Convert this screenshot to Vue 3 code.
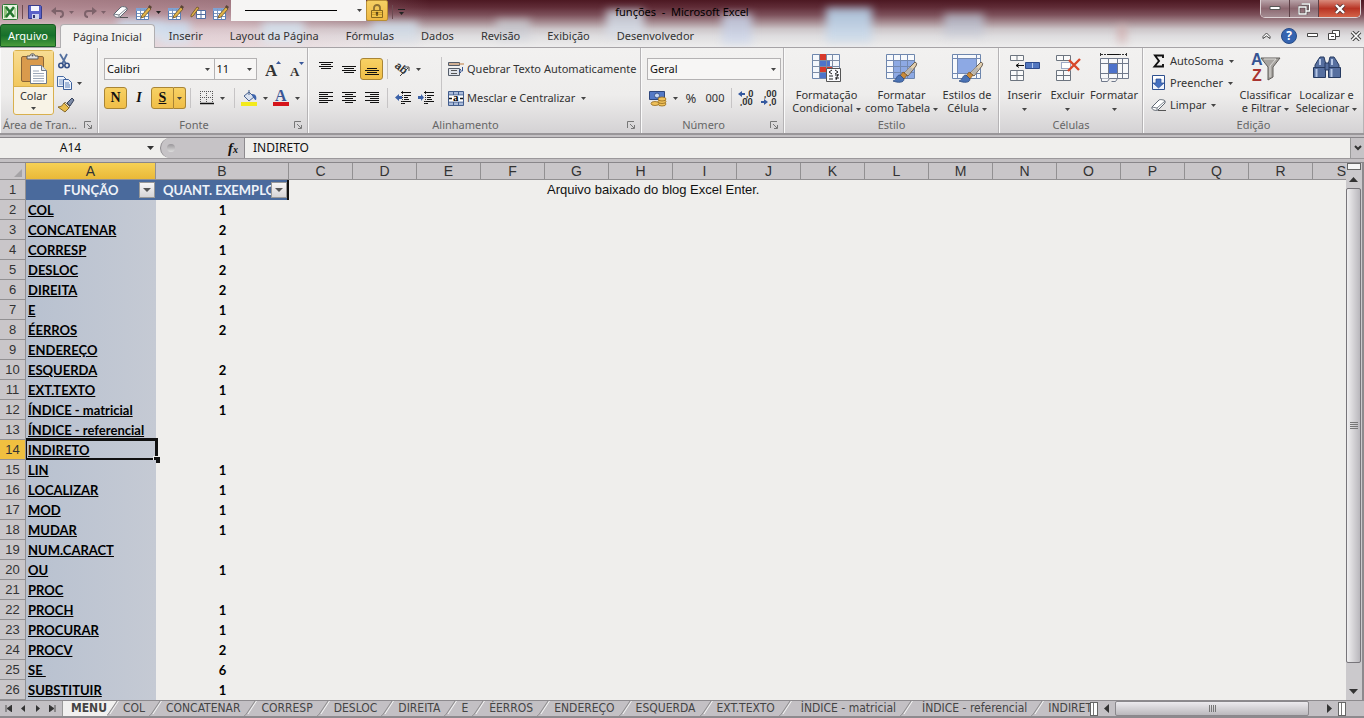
<script setup>
import { h, ref } from 'vue'

const pencil = '<path d="M7 11 14 3l2 2-7 8-3 1z" fill="#e0b348" stroke="#6b5026" stroke-width=".8"/><path d="m13 3 1.500-2L17 3l-1.500 2z" fill="#5b4636"/>'
const miniTable = '<path d="M1.500 4.500h12v11h-12z" fill="#fff" stroke="#5a7fb5"/><path d="M1 4h13v3H1z" fill="#7ea2d4"/><path d="M5.500 5v10M9.500 5v10M2 9.500h11M2 12.500h11" stroke="#7c96bd"/>'
const brush = '<path d="M30 9q3 1 1 4l-8 10-4-3z" fill="#e2cfae" stroke="#6c6156"/><path d="m25 14 3 2-5 6-3-3z" fill="#b9b5b0"/><path d="m18 19 4 3-3 4-4-3z" fill="#c98a3a" stroke="#7d5524" stroke-width=".7"/><path d="M15 22c-4 0-3 5-7 6 5 2 11 2 11-2z" fill="#4a72b4" stroke="#2c4a80" stroke-width=".8"/>'

const icons = {
  excel: [16, 16, '<rect x=".5" y=".5" width="15" height="15" rx="1" fill="#e9f4e3" stroke="#2d7636"/><path d="M2 2h3v12H2z" fill="#8fc27c"/><path d="m4 3 8 10M12 3 4 13" stroke="#23752f" stroke-width="2.600"/><path d="M13 4v9" stroke="#7cb46b"/>'],
  save: [16, 16, '<path d="M1.500 1.500h12l1 1v12h-13z" fill="#5a62c8" stroke="#373c8c"/><path d="M4 2h8v5H4z" fill="#f5f6fc"/><path d="M5 10h7v5H5z" fill="#cfd4ec"/><path d="M6 11h2v3H6z" fill="#30356f"/>'],
  undo: [14, 12, '<path d="M4 5h5c4 0 4 6 0 6" fill="none" stroke="#7d626a" stroke-width="2"/><path d="M0 5l5-4v8z" fill="#7d626a"/>'],
  redo: [14, 12, '<path d="M10 5H5c-4 0-4 6 0 6" fill="none" stroke="#7d626a" stroke-width="2"/><path d="m14 5-5-4v8z" fill="#7d626a"/>'],
  eraser: [16, 14, '<path d="m1 9 7-7c1-1 6 0 6 1v2l-7 7c-2 1-6 0-6-2z" fill="#fff" stroke="#5d6570"/><path d="m1 9 5 1 8-7M6 10v2" fill="none" stroke="#7a828c"/><path d="M7 12.500h8" stroke="#555"/>'],
  tablePencil: [17, 16, miniTable + pencil],
  pencilGrid: [17, 16, '<path d="M6.500 6.500h9v8h-9z" fill="#fff" stroke="#516d9f"/><path d="M11 7v7M7 10.500h8" stroke="#516d9f"/><path d="m1 11 6-8 2 1-6 8-2 1z" fill="#e0b348" stroke="#6b5026" stroke-width=".8"/>'],
  lock: [14, 16, '<path d="M4 8V5c0-4 6-4 6 0v3" fill="none" stroke="#8d7134" stroke-width="1.800"/><path d="M1.500 7.500h11v7h-11z" fill="#f0c448" stroke="#86691f"/><path d="M2 9.500h10M2 11.500h10" stroke="#d19f2e"/><circle cx="7" cy="10" r="1.300" fill="#5e4a19"/><path d="M7 10v3" stroke="#5e4a19" stroke-width="1.400"/>'],
  paste: [28, 32, '<rect x="1.500" y="3.500" width="22" height="25" rx="1.500" fill="#d99a4c" stroke="#8a6537"/><path d="M7 6h11V3h-3c0-3-5-3-5 0H7z" fill="#e3e3e3" stroke="#595959"/><circle cx="12.500" cy="2.500" r="1" fill="#555"/><path d="M10.500 12.500h11l5 5v13h-16z" fill="#fff" stroke="#707a88"/><path d="M21.500 12.500v5h5" fill="#dce4ee" stroke="#707a88"/><path d="M13 18h6M13 20.500h11M13 23h11M13 25.500h11M13 28h11" stroke="#9ba7b8"/>'],
  cut: [14, 16, '<path d="m3 1 6 10M10 1 5 11" stroke="#54709f" stroke-width="1.800"/><circle cx="4" cy="12.500" r="2.200" fill="none" stroke="#344f86" stroke-width="1.600"/><circle cx="10" cy="12.500" r="2.200" fill="none" stroke="#344f86" stroke-width="1.600"/>'],
  copy: [16, 14, '<path d="M.5.5h6l3 3v7h-9z" fill="#eef3fb" stroke="#476aa3"/><path d="M2 4h4M2 6h5M2 8h5" stroke="#7997c6"/><path d="M6.500 3.500h5l3 3v7h-8z" fill="#eef3fb" stroke="#3c5f9b"/><path d="M8 7h4M8 9h5M8 11h5" stroke="#5e82ba"/>'],
  painter: [18, 16, '<path d="m10 6 5-5 2 2-4 6z" fill="#7c8aa6" stroke="#374259"/><path d="m8 5 5 5-2 1-4-4z" fill="#ece3cf" stroke="#6b5c3c" stroke-width=".8"/><path d="m7 6 5 5-4 4-7-5c3 0 5-2 6-4z" fill="#e8bc4c" stroke="#85682a"/>'],
  grow: [16, 18, '<text x="0" y="16" font-family="Liberation Serif, serif" font-size="17" font-weight="bold" fill="#333">A</text><path d="m11 4 2.500-3L16 4z" fill="#39589a"/>'],
  shrink: [16, 18, '<text x="2" y="16" font-family="Liberation Serif, serif" font-size="13" font-weight="bold" fill="#333">A</text><path d="M11 2h5l-2.500 3z" fill="#39589a"/>'],
  borders: [14, 14, '<path d="M.5 0v13M6.500 0v13M12.500 0v13M0 .5h13M0 6.500h13" stroke="#555" stroke-dasharray="1 1"/><path d="M0 12.500h14" stroke="#111" stroke-width="1.500"/>'],
  fill: [16, 16, '<path d="m3 6 5-4 5 5-5 4z" fill="#dbe3f0" stroke="#49628f"/><path d="M8 0v5" stroke="#49628f"/><path d="M11 4c4 0 5 3 4 6-2 0-2-3-4-4z" fill="#3f65ad"/><path d="M0 12h16v4H0z" fill="#f3ea1c"/>'],
  fontColor: [16, 16, '<text x="2" y="11" font-family="Liberation Serif, serif" font-size="16" font-weight="bold" fill="#3c5796">A</text><path d="M0 12h16v4H0z" fill="#d5141b"/>'],
  top: [14, 14, '<path d="M0 .5h14M2 2.500h10M0 4.500h14M2 6.500h10" stroke="#111"/>'],
  middle: [14, 14, '<path d="M0 4.500h14M2 6.500h10M0 8.500h14M2 10.500h10" stroke="#111"/>'],
  bottom: [14, 14, '<path d="M2 6.500h10M0 8.500h14M2 10.500h10M0 12.500h14" stroke="#111"/>'],
  left: [14, 14, '<path d="M0 1.500h14M0 3.500h9M0 5.500h14M0 7.500h9M0 9.500h14M0 11.500h9" stroke="#111"/>'],
  center: [14, 14, '<path d="M0 1.500h14M3 3.500h8M0 5.500h14M3 7.500h8M0 9.500h14M3 11.500h8" stroke="#111"/>'],
  right: [14, 14, '<path d="M0 1.500h14M5 3.500h9M0 5.500h14M5 7.500h9M0 9.500h14M5 11.500h9" stroke="#111"/>'],
  rotate: [16, 16, '<g transform="rotate(40 6 8)"><text x="0" y="10" font-family="Liberation Sans, sans-serif" font-size="11" font-weight="bold" fill="#333">ab</text></g><path d="m6 15 8-8M15 6v4M15 6h-4" stroke="#444" fill="none"/>'],
  outdent: [16, 14, '<path d="M6 1.500h10M9 4.500h7M9 6.500h4M9 8.500h5M6 10.500h10M6 12.500h4" stroke="#111"/><path d="M0 6.500 4 3v2h3v3H4v2z" fill="#3c62a8"/><path d="M7.500 0v14" stroke="#333" stroke-dasharray="1 1"/>'],
  indent: [16, 14, '<path d="M6 1.500h10M9 4.500h7M9 6.500h4M9 8.500h5M6 10.500h10M6 12.500h4" stroke="#111"/><path d="M6 6.500 3 3v2H0v3h3v2z" fill="#3c62a8"/><path d="M7.500 0v14" stroke="#333" stroke-dasharray="1 1"/>'],
  wrap: [16, 16, '<path d="M.5 1.500h11v3H.5zM.5 7.500h11v7H.5z" fill="#dfe3ea" stroke="#545c69"/><path d="M1 3h15" stroke="#c07d3e"/><path d="M3 9.500h6M3 12.500h6" stroke="#555"/><path d="M14.500 6v4h-3M13 8l-2 2 2 2" fill="none" stroke="#39558e"/>'],
  merge: [16, 15, '<path d="M.5.5h15v14H.5z" fill="#a9bbda" stroke="#425d8d"/><path d="M0 4h16M0 11h16M5.500 1v3M10.500 1v3M5.500 11v3M10.500 11v3" stroke="#425d8d"/><path d="M1 4.500h14v6H1z" fill="#fff"/><path d="M1 7.500h3M12 7.500h3" stroke="#111" stroke-width="1.500"/><text x="5" y="10" font-family="Liberation Serif, serif" font-size="11" font-weight="bold">a</text>'],
  money: [18, 17, '<path d="M.5 1.500h15v8H.5z" fill="#5379c6" stroke="#2f477d"/><circle cx="8" cy="5.500" r="2.500" fill="#c7d7f1" stroke="#3a558f"/><g fill="#efc15a" stroke="#936a1e" stroke-width=".8"><ellipse cx="13" cy="14" rx="4" ry="2"/><ellipse cx="13" cy="11.500" rx="4" ry="2"/><ellipse cx="13" cy="9" rx="4" ry="2"/><ellipse cx="6" cy="13.500" rx="4" ry="2"/></g>'],
  incDec: [17, 16, '<path d="M0 4 4 1v2h3v2H4v2z" fill="#34599f"/><text x="8" y="7" font-family="Roboto, sans-serif" font-size="9" font-weight="bold" fill="#333">,0</text><text x="2" y="15" font-family="Roboto, sans-serif" font-size="9" font-weight="bold" fill="#333">,00</text>'],
  decDec: [17, 16, '<path d="M7 12 3 9v2H0v2h3v2z" fill="#34599f"/><text x="3" y="7" font-family="Roboto, sans-serif" font-size="9" font-weight="bold" fill="#333">,00</text><text x="8" y="15" font-family="Roboto, sans-serif" font-size="9" font-weight="bold" fill="#333">,0</text>'],
  conditional: [32, 30, '<path d="M1.500 1.500h27v24h-27z" fill="#f4f7fb" stroke="#6d86ad"/><path d="M8 1h7v6H8zM8 13h13v6H8z" fill="#d8392b"/><path d="M8 7h11v6H8zM8 19h7v6H8z" fill="#4d74cb"/><path d="M8.500 1v25M15.500 1v25M21.500 1v25M1 7.500h28M1 13.500h28M1 19.500h28" stroke="#7d8ca5" fill="none"/><path d="M15.500 15.500h14v13h-14z" fill="#fbfbfd" stroke="#555"/><path d="m21 17-3 2 3 2M18 23h4M18 26h4M24 17l3 2-3 2M24 22h4M24 25h4M27 21l-2 6" stroke="#222" fill="none"/>'],
  formatTable: [33, 30, '<path d="M1.500 1.500h28v24h-28z" fill="#f7f9fc" stroke="#6d86ad"/><path d="M8 7h21v18H8z" fill="#8da9e4"/><path d="M8.500 1v25M15.500 1v25M22.500 1v25M1 7.500h28M1 13.500h28M1 19.500h28" stroke="#7389b2" fill="none"/>' + brush],
  cellStyle: [33, 30, '<path d="M1.500 1.500h28v24h-28z" fill="#f7f9fc" stroke="#6d86ad"/><path d="M6 6h19v14H6z" fill="#8da9e4"/><path d="M6.500 1v25M25.500 1v25M1 5.500h28M1 20.500h28" stroke="#7389b2" fill="none"/>' + brush],
  insert: [32, 28, '<g fill="#fafafa" stroke="#6c747f"><path d="M1.500 1.500h13v5h-13zM1.500 16.500h13v10h-13z"/><path d="M8 2v5M8 17v10M1 21.500h14" fill="none"/></g><path d="M16.500 8.500h14v6h-14z" fill="#5276bf" stroke="#2e4b8b"/><path d="M23.500 9v5" stroke="#b8ccef"/><path d="M7 11.500h8M7 11.500l3-2M7 11.500l3 2" stroke="#111"/>'],
  delete: [32, 28, '<g fill="#fafafa" stroke="#6c747f"><path d="M4.500 1.500h14v5h-14zM4.500 16.500h14v10h-14z"/><path d="M11.500 2v5M11.500 17v10M4 21.500h15" fill="none"/></g><path d="M9.500 8.500h9v6h-9z" fill="#fff" stroke="#445a92" stroke-dasharray="1 1"/><path d="m17 6 10 10M28 5 16 17" stroke="#d8472a" stroke-width="2.400"/>'],
  format: [32, 30, '<path d="M2.500 5.500h28v20h-28z" fill="#f7f8fa" stroke="#70798b"/><path d="M10.500 6v20M19.500 6v20M24.500 6v20M3 10.500h28M3 20.500h28" stroke="#70798b" fill="none"/><path d="M3.500 25.500v3h6l2-3M13.500 28.500h4l2-3" stroke="#70798b" fill="#f7f8fa"/><path d="M11 11h8v9h-8z" fill="#4d72cb"/><path d="M2.500 0v3M28.500 0v3" stroke="#333"/><path d="M3 1.500h25" stroke="#333" stroke-dasharray="2 1"/><path d="M9 1.500h12" stroke="#111"/>'],
  sum: [14, 14, '<path d="M11 4V1.500H3L7 7l-4.500 5.500H11V10" fill="none" stroke="#111" stroke-width="1.900"/>'],
  fillDown: [14, 16, '<path d="M.5.5h12v14H.5z" fill="#eef3fc" stroke="#2e508f"/><path d="M1 1h11v3H1z" fill="#fff"/><path d="M4 4h5v4h3l-5.500 5L1 8h3z" fill="#4470c1" stroke="#264b91" stroke-width=".7"/>'],
  sort: [32, 32, '<path d="M11 6h19l-7 9v10l-5 3V15z" fill="#a7a4a0" stroke="#5f5c59"/><path d="M14 7h12l-6 7v11" fill="none" stroke="#dddbd8"/><text x="1" y="13" font-family="Liberation Sans, sans-serif" font-size="16" font-weight="bold" fill="#365493">A</text><text x="2" y="29" font-family="Liberation Sans, sans-serif" font-size="16" font-weight="bold" fill="#a93430">Z</text>'],
  find: [30, 30, '<g fill="#566f9f" stroke="#263a60"><path d="M8 4h4l2 8v4H3v-4l3-5zM18 4h4l2 3 3 5v4H16v-4z"/><path d="M1.500 14.500h12v10h-12zM16.500 14.500h12v10h-12z"/><path d="M13 10h4v7h-4z"/></g><path d="M4.500 16v8M19.500 16v8M8 6v6M20 6v6" stroke="#b6c7e6" stroke-width="2"/>'],
}

const Icon = ({ name }) => {
  const [w, ht, body] = icons[name]
  return h('svg', { width: w, height: ht, viewBox: `0 0 ${w} ${ht}`, 'aria-hidden': 'true', innerHTML: body })
}
Icon.props = ['name']

const Caret = () => h('svg', { class: 'caret', width: 5, height: 3, viewBox: '0 0 5 3', 'aria-hidden': 'true' }, [
  h('path', { d: 'M0 0h5L2.500 3z', fill: 'currentColor' }),
])
const Launcher = () => h('button', { 'aria-label': 'Mais opções' }, [
  h('svg', { width: 8, height: 8, viewBox: '0 0 8 8', innerHTML: '<path d="M.5 7V.5H7" fill="none" stroke="#777"/><path d="m3 3 4 4M7.500 4v3.500H4" fill="none" stroke="#777"/>' }),
])

const ribbonTabs = ['Página Inicial', 'Inserir', 'Layout da Página', 'Fórmulas', 'Dados', 'Revisão', 'Exibição', 'Desenvolvedor']
const columns = 'CDEFGHIJKLMNOPQRS'.split('')
const rows = [
  ['COL', 1], ['CONCATENAR', 2], ['CORRESP', 1], ['DESLOC', 2], ['DIREITA', 2], ['E', 1], ['ÉERROS', 2],
  ['ENDEREÇO', ''], ['ESQUERDA', 2], ['EXT.TEXTO', 1], ['ÍNDICE - matricial', 1], ['ÍNDICE - referencial', ''],
  ['INDIRETO', ''], ['LIN', 1], ['LOCALIZAR', 1], ['MOD', 1], ['MUDAR', 1], ['NUM.CARACT', ''], ['OU', 1],
  ['PROC', ''], ['PROCH', 1], ['PROCURAR', 1], ['PROCV', 2], ['SE\u00a0', 6], ['SUBSTITUIR', 1],
]
const sheets = ['MENU', 'COL', 'CONCATENAR', 'CORRESP', 'DESLOC', 'DIREITA', 'E', 'ÉERROS', 'ENDEREÇO', 'ESQUERDA', 'EXT.TEXTO', 'ÍNDICE - matricial', 'ÍNDICE - referencial', 'INDIRETO']
const nameBox = ref('A14')
const formula = ref('INDIRETO')
</script>

<template>
  <div class="app">
    <header class="chrome">
      <div class="titlebar">
        <div class="quick">
          <Icon name="excel" />
          <i class="bar first"></i>
          <button class="q w24" aria-label="Salvar"><Icon name="save" /></button>
          <button class="q w32 dim" aria-label="Desfazer"><Icon name="undo" /><Caret /></button>
          <button class="q w32 dim" aria-label="Refazer"><Icon name="redo" /><Caret /></button>
          <button class="q w20" aria-label="Apagar borda"><Icon name="eraser" /></button>
          <button class="q w32" aria-label="Desenhar borda"><Icon name="tablePencil" /><Caret /></button>
          <button class="q w24" aria-label="Desenhar grade"><Icon name="tablePencil" /></button>
          <button class="q w20" aria-label="Grade de borda"><Icon name="pencilGrid" /></button>
          <button class="q w20" aria-label="Borda"><Icon name="tablePencil" /></button>
          <button class="linestyle" aria-label="Estilo da linha"><i></i><Caret /></button>
          <button class="lock" aria-label="Bloquear"><Icon name="lock" /></button>
          <i class="bar"></i>
          <button class="q more" aria-label="Personalizar"><i></i><Caret /></button>
        </div>
        <h1>funções&nbsp; -&nbsp; Microsoft Excel</h1>
        <div class="window">
          <button aria-label="Minimizar"><svg width="12" height="5" viewBox="0 0 12 5"><path d="M1 .5h10v3H1z" fill="#fff" stroke="#555" /></svg></button>
          <button aria-label="Restaurar"><svg width="12" height="12" viewBox="0 0 12 12"><path d="M3.500 1h8v7h-3M1 4h7v7H1z" fill="none" stroke="#444" stroke-width="2.600" /><path d="M3.500 1h8v7h-3M1 4h7v7H1z" fill="none" stroke="#fff" stroke-width="1.300" /></svg></button>
          <button class="close" aria-label="Fechar"><svg width="12" height="10" viewBox="0 0 12 10"><path d="m2 1 8 8M10 1 2 9" stroke="#553131" stroke-width="4" /><path d="m2 1 8 8M10 1 2 9" stroke="#fff" stroke-width="2.400" /></svg></button>
        </div>
      </div>
      <nav class="tabs">
        <button class="file">Arquivo</button>
        <button v-for="(t, i) in ribbonTabs" :key="t" class="tab" :class="{ active: i === 0 }">{{ t }}</button>
        <div class="tabtools">
          <button aria-label="Minimizar a faixa"><svg width="9" height="8" viewBox="0 0 9 8"><path d="M1 4.500 4.500 1 8 4.500v2L4.500 4 1 6.500z" fill="#fff" stroke="#444" /></svg></button>
          <button aria-label="Ajuda"><svg width="16" height="16" viewBox="0 0 16 16"><circle cx="8" cy="8" r="7.500" fill="#3564b0" stroke="#284b86" /><text x="8" y="12" text-anchor="middle" font-size="12" font-weight="bold" font-family="Open Sans, sans-serif" fill="#fff">?</text></svg></button>
          <button aria-label="Minimizar pasta"><svg width="11" height="5" viewBox="0 0 11 5"><path d="M.5.5h10v3H.5z" fill="#fff" stroke="#444" /></svg></button>
          <button aria-label="Restaurar pasta"><svg width="12" height="11" viewBox="0 0 12 11"><path d="M4.500.5h7v6h-7z" fill="#fff" stroke="#444" /><path d="M.5 3.500h7v6h-7z" fill="#fff" stroke="#444" /><path d="M3 6h3v1H3z" fill="#444" /></svg></button>
          <button aria-label="Fechar pasta"><svg width="12" height="10" viewBox="0 0 12 10"><path d="m2 1 8 8M10 1 2 9" stroke="#444" stroke-width="3.600" /><path d="m2 1 8 8M10 1 2 9" stroke="#fff" stroke-width="1.600" /></svg></button>
        </div>
      </nav>
    </header>

    <section class="ribbon">
      <div class="group clipboard">
        <div class="body">
          <button class="paste"><span><Icon name="paste" /></span>Colar<Caret /></button>
          <div class="stack">
            <button aria-label="Recortar"><Icon name="cut" /></button>
            <button aria-label="Copiar"><Icon name="copy" /><Caret /></button>
            <button aria-label="Pincel"><Icon name="painter" /></button>
          </div>
        </div>
        <footer><span>Área de Tran...</span><Launcher class="launch" /></footer>
      </div>

      <div class="group font">
        <div class="body rows">
          <div class="line">
            <label class="combo fontname"><select aria-label="Fonte"><option>Calibri</option></select><Caret /></label>
            <label class="combo fontsize"><select aria-label="Tamanho"><option>11</option></select><Caret /></label>
            <button class="t w24" aria-label="Aumentar fonte"><Icon name="grow" /></button>
            <button class="t w20" aria-label="Diminuir fonte"><Icon name="shrink" /></button>
          </div>
          <div class="line">
            <button class="t w23 on serif">N</button>
            <button class="t w24 serif italic">I</button>
            <button class="t w23 on serif under split">S</button><button class="t on splitarrow" aria-label="Mais sublinhados"><Caret /></button>
            <i class="vsep"></i>
            <button class="t w36" aria-label="Bordas"><Icon name="borders" /><Caret /></button>
            <i class="vsep"></i>
            <button class="t w32" aria-label="Preenchimento"><Icon name="fill" /><Caret /></button>
            <button class="t w32" aria-label="Cor da fonte"><Icon name="fontColor" /><Caret /></button>
          </div>
        </div>
        <footer><span>Fonte</span><Launcher class="launch" /></footer>
      </div>

      <div class="group align">
        <div class="body">
          <div class="rows">
            <div class="line">
              <button class="t w23" aria-label="Superior"><Icon name="top" /></button>
              <button class="t w23" aria-label="Meio"><Icon name="middle" /></button>
              <button class="t w23 on" aria-label="Inferior"><Icon name="bottom" /></button>
              <i class="vsep"></i>
              <button class="t w32" aria-label="Orientação"><Icon name="rotate" /><Caret /></button>
            </div>
            <div class="line">
              <button class="t w23" aria-label="Esquerda"><Icon name="left" /></button>
              <button class="t w23" aria-label="Centro"><Icon name="center" /></button>
              <button class="t w23" aria-label="Direita"><Icon name="right" /></button>
              <i class="vsep"></i>
              <button class="t w23" aria-label="Diminuir recuo"><Icon name="outdent" /></button>
              <button class="t w23" aria-label="Aumentar recuo"><Icon name="indent" /></button>
            </div>
          </div>
          <i class="tall"></i>
          <div class="rows">
            <button class="text"><Icon name="wrap" />Quebrar Texto Automaticamente</button>
            <button class="text"><Icon name="merge" />Mesclar e Centralizar<Caret /></button>
          </div>
        </div>
        <footer><span>Alinhamento</span><Launcher class="launch" /></footer>
      </div>

      <div class="group number">
        <div class="body rows">
          <label class="combo wide"><select aria-label="Formato"><option>Geral</option></select><Caret /></label>
          <div class="line">
            <button class="t w32" aria-label="Contabilização"><Icon name="money" /><Caret /></button>
            <button class="t w24 big-sign">%</button>
            <button class="t w24">000</button>
            <i class="vsep"></i>
            <button class="t w23" aria-label="Aumentar decimais"><Icon name="incDec" /></button>
            <button class="t w23" aria-label="Diminuir decimais"><Icon name="decDec" /></button>
          </div>
        </div>
        <footer><span>Número</span><Launcher class="launch" /></footer>
      </div>

      <div class="group style">
        <div class="body bigs">
          <button class="big b76"><Icon name="conditional" /><span>Formatação<br>Condicional <Caret /></span></button>
          <button class="big b76"><Icon name="formatTable" /><span>Formatar<br>como Tabela <Caret /></span></button>
          <button class="big b56"><Icon name="cellStyle" /><span>Estilos de<br>Célula <Caret /></span></button>
        </div>
        <footer><span>Estilo</span></footer>
      </div>

      <div class="group cells">
        <div class="body bigs">
          <button class="big b44"><Icon name="insert" /><span>Inserir<br><Caret /></span></button>
          <button class="big b44"><Icon name="delete" /><span>Excluir<br><Caret /></span></button>
          <button class="big b48"><Icon name="format" /><span>Formatar<br><Caret /></span></button>
        </div>
        <footer><span>Células</span></footer>
      </div>

      <div class="group edit">
        <div class="body">
          <div class="stack list">
            <button><Icon name="sum" />AutoSoma<Caret /></button>
            <button><Icon name="fillDown" />Preencher<Caret /></button>
            <button><Icon name="eraser" />Limpar<Caret /></button>
          </div>
          <div class="bigs">
            <button class="big b60"><Icon name="sort" /><span>Classificar<br>e Filtrar <Caret /></span></button>
            <button class="big b60"><Icon name="find" /><span>Localizar e<br>Selecionar <Caret /></span></button>
          </div>
        </div>
        <footer><span>Edição</span></footer>
      </div>
    </section>

    <section class="formulabar">
      <div class="namebox"><input v-model="nameBox" aria-label="Caixa de nome"><svg width="7" height="4" viewBox="0 0 7 4"><path d="M0 0h7L3.500 4z" fill="#333" /></svg></div>
      <div class="fx"><i></i><button aria-label="Inserir função">f<sub>x</sub></button></div>
      <input v-model="formula" class="formula" aria-label="Barra de fórmulas">
      <button class="expand" aria-label="Expandir"><svg width="8" height="6" viewBox="0 0 8 6"><path d="m1 1 3 3 3-3" fill="none" stroke="#333" stroke-width="2" /></svg></button>
    </section>

    <main class="work">
      <div class="sheet">
        <table>
          <colgroup><col class="c0"><col class="ca"><col class="cb"><col v-for="c in 16" :key="c" class="cc"><col></colgroup>
          <thead>
            <tr>
              <th class="corner"><svg width="8" height="8" viewBox="0 0 8 8"><path d="M8 0v8H0z" fill="#a5a3a6" /></svg></th>
              <th class="sel">A</th><th>B</th>
              <th v-for="c in columns" :key="c" :class="{ last: c === 'S' }">{{ c }}</th>
            </tr>
          </thead>
          <tbody>
            <tr>
              <th>1</th>
              <td class="head"><span>FUNÇÃO</span><button class="filter" aria-label="Filtrar função"><svg width="8" height="4" viewBox="0 0 8 4"><path d="M0 0h8L4 4z" fill="#555" /></svg></button></td>
              <td class="head second"><span>QUANT. EXEMPLOS</span><button class="filter" aria-label="Filtrar exemplos"><svg width="8" height="4" viewBox="0 0 8 4"><path d="M0 0h8L4 4z" fill="#555" /></svg></button></td>
              <td colspan="4"></td>
              <td colspan="13" class="note">Arquivo baixado do blog Excel Enter.</td>
            </tr>
            <tr v-for="(r, i) in rows" :key="r[0]">
              <th :class="{ sel: i === 12 }">{{ i + 2 }}</th>
              <td class="name" :class="{ current: i === 12 }"><a href="#">{{ r[0] }}</a></td>
              <td class="qty">{{ r[1] }}</td>
              <td colspan="17"></td>
            </tr>
          </tbody>
        </table>
      </div>
      <div class="vscroll">
        <button class="splitter" aria-label="Dividir"></button>
        <button aria-label="Rolar para cima"><svg width="9" height="5" viewBox="0 0 9 5"><path d="m0 5 4.500-5L9 5z" fill="#333" /></svg></button>
        <div class="thumb"><i></i></div>
        <button aria-label="Rolar para baixo"><svg width="9" height="5" viewBox="0 0 9 5"><path d="m0 0 4.500 5L9 0z" fill="#333" /></svg></button>
      </div>
    </main>

    <footer class="bottom">
      <div class="navs">
        <button aria-label="Primeira"><svg width="7" height="7" viewBox="0 0 7 7"><path d="M1 0v7M7 0v7L2 3.500z" stroke="#333" stroke-width=".8" fill="#333" /></svg></button>
        <button aria-label="Anterior"><svg width="7" height="7" viewBox="0 0 7 7"><path d="M5 0v7L1 3.500z" fill="#333" /></svg></button>
        <button aria-label="Próxima"><svg width="7" height="7" viewBox="0 0 7 7"><path d="M2 0v7l4-3.500z" fill="#333" /></svg></button>
        <button aria-label="Última"><svg width="7" height="7" viewBox="0 0 7 7"><path d="M6 0v7M0 0v7l5-3.500z" stroke="#333" stroke-width=".8" fill="#333" /></svg></button>
      </div>
      <nav class="sheets">
        <template v-for="(s, i) in sheets" :key="s">
          <button :class="{ active: i === 0, long: s.startsWith('ÍND') }">{{ s }}</button>
          <svg width="16" height="17" viewBox="0 0 16 17"><path v-if="i === 0" d="M0 0h14L4 15H0z" fill="#f1f0ef" /><path d="M14 0 6 12q-2 3-4 4" fill="none" stroke="#8d8b8e" /><path d="M15.500 0 7 13" fill="none" stroke="#f5f5f5" /></svg>
        </template>
      </nav>
      <div class="hscroll">
        <i class="grip"></i>
        <button aria-label="Rolar para a esquerda"><svg width="5" height="9" viewBox="0 0 5 9"><path d="M5 0v9L0 4.500z" fill="#333" /></svg></button>
        <div class="thumb"><i></i></div>
        <button aria-label="Rolar para a direita"><svg width="5" height="9" viewBox="0 0 5 9"><path d="M0 0v9l5-4.500z" fill="#333" /></svg></button>
        <i class="grip"></i>
      </div>
    </footer>
  </div>
</template>

<style>
body { overflow: hidden; background: #c3c0c3; }
</style>

<style scoped>
.app { height: 100vh; display: flex; flex-direction: column; font: 11px/14px "Noto Sans", "Open Sans", sans-serif; color: #333; background: #c3c0c3; }
.app * { box-sizing: border-box; }
.app :deep(svg) { display: block; flex: none; }
button { font: inherit; color: inherit; border: 0; padding: 0; margin: 0; background: none; display: flex; align-items: center; white-space: nowrap; flex: none; }
button :deep(.caret), .caret { color: #444; }
.chrome { flex: none; position: relative; overflow: hidden; background:
  linear-gradient(90deg, #e5c6cd99 0, #e5c6cd88 230px, #e5c6cd00 430px, #e5c6cd00 100%),
  linear-gradient(#4c1822 0, #5f2b36 7px, #7d515b 15px, #a58a90 22px, #ccc5c8 29px, #dedddf 36px, #efeeee 48px); }
.chrome::before { content: ""; position: absolute; inset: 0; filter: blur(4px); background:
  linear-gradient(#c3d4e8, #dfe5ee) 118px 20px / 46px 18px no-repeat,
  linear-gradient(#c3d4e8, #dfe5ee) 160px 22px / 30px 22px no-repeat,
  linear-gradient(#ccd8e6, #e4e7ec) 262px 22px / 42px 22px no-repeat,
  linear-gradient(#c4cfdd, #e0e4ea) 372px 22px / 46px 20px no-repeat,
  linear-gradient(#b9b4ba, #dcdfe5) 496px 20px / 34px 20px no-repeat,
  linear-gradient(#b9b9c4, #dfe5ee) 606px 10px / 38px 26px no-repeat,
  linear-gradient(#b5b7cb, #d9e1f0) 722px 14px / 30px 30px no-repeat,
  linear-gradient(#a8bdd5, #d5e1ee) 826px 8px / 46px 34px no-repeat,
  linear-gradient(#a39fae, #d5d9e2) 944px 14px / 40px 22px no-repeat,
  linear-gradient(#c99fa0, #ddc9c9) 1118px 26px / 8px 18px no-repeat; }
.titlebar { height: 24px; display: flex; justify-content: space-between; position: relative; }
.quick { display: flex; align-items: center; padding-left: 2px; }
.bar { width: 1px; height: 14px; margin: 0 4px 0 4px; background: #6d4b52; }
.bar.first { margin-right: 0; }
.q { height: 22px; gap: 4px; justify-content: center; }
.q :deep(.caret) { color: #222; }
.dim :deep(.caret) { color: #7d626a; }
.w20 { width: 22px; } .w23 { width: 23px; } .w24 { width: 24px; } .w32 { width: 32px; } .w36 { width: 36px; }
.q.w24 { width: 23px; }
.linestyle { width: 135px; height: 21px; align-self: flex-start; background: #f6f5f4; justify-content: space-between; padding: 0 4px 0 14px; }
.linestyle i { width: 92px; height: 1px; background: #000; }
.lock { width: 22px; height: 21px; align-self: flex-start; background: linear-gradient(#f5cf63, #efb944); border: 1px solid #b98f35; border-radius: 2px; justify-content: center; }
.more { flex-direction: column; gap: 2px; width: 9px; }
.more i { width: 7px; height: 1px; background: #222; }
h1 { position: absolute; left: 0; right: 0; top: 5px; margin: 0; text-align: center; font: 11px/14px "Noto Sans", sans-serif; color: #000; pointer-events: none; }
.window { display: flex; width: 101px; height: 18px; margin-right: 3px; border: 1px solid #ddd2d4; border-top: 0; border-radius: 0 0 5px 5px; overflow: hidden; }
.window button { width: 29px; justify-content: center; background: linear-gradient(#b9a4a9, #8c6870 50%, #a58d93); border-right: 1px solid #5d4046; }
.window .close { flex: 1; background: linear-gradient(#d98b7c, #b83424 50%, #d46349); border: 0; }
.tabs { height: 24px; display: flex; align-items: stretch; border-bottom: 1px solid #a6a3a6; position: relative; }
.file { width: 56px; justify-content: center; color: #fff; background: linear-gradient(#2f8137, #17702a 50%, #4a9c3a); border: 1px solid #155c22; border-radius: 3px 3px 0 0; margin-right: 4px; }
.tab { padding: 0 12px 0 13px; border: 1px solid transparent; }
.tab.active { background: #f3f2f1; border-color: #b0aeb0; border-bottom: 0; border-radius: 4px 4px 0 0; margin-bottom: -1px; padding-left: 12px; }
.tabtools { margin-left: auto; display: flex; align-items: center; gap: 10px; padding-right: 2px; }

.ribbon { height: 87px; flex: none; display: flex; background: linear-gradient(#f2f1f0 0, #eeedec 55%, #d4d2d4 100%); border-bottom: 2px solid #999699; }
.group { display: flex; flex-direction: column; flex: none; border-right: 1px solid #b5b3b5; border-left: 1px solid #fafafa; }
.body { flex: 1; display: flex; padding: 2px 0 0 5px; }
.group footer { height: 17px; display: flex; align-items: center; justify-content: center; position: relative; color: #666; white-space: nowrap; padding-right: 18px; }
.group > footer > span:only-child { margin-right: -18px; }
.launch { position: absolute; right: 5px; top: 5px; }
.clipboard { width: 98px; } .font { width: 210px; } .align { width: 333px; } .number { width: 143px; } .style { width: 215px; } .cells { width: 144px; } .edit { flex: 1; }
.clipboard .body { padding-left: 12px; gap: 3px; }
.paste { width: 41px; height: 65px; flex-direction: column; border: 1px solid #d8b04d; border-radius: 3px; background: #f8f3e6; line-height: 18px; }
.paste span { height: 36px; width: 100%; display: flex; justify-content: center; align-items: center; background: linear-gradient(#f8dc93, #f2c85e); border-bottom: 1px solid #d8b04d; }
.paste :deep(.caret) { margin-top: 2px; }
.stack { display: flex; flex-direction: column; }
.stack button { height: 22px; gap: 4px; }
.rows { display: flex; flex-direction: column; gap: 7px; }
.body.rows { padding-top: 10px; }
.align .body > .rows { padding-top: 8px; }
.line { display: flex; align-items: center; height: 22px; }
.combo { display: flex; align-items: center; height: 22px; background: #f7f6f5; border: 1px solid #b4b2b3; padding-right: 4px; color: #111; }
.combo select { appearance: none; flex: 1; min-width: 0; font: inherit; color: inherit; border: 0; background: none; padding: 0 2px; outline: 0; }
.fontname { width: 112px; } .fontsize { width: 43px; margin-right: 4px; border-left: 0; } .wide { width: 134px; }
.t { height: 22px; justify-content: center; gap: 6px; }
.big-sign { font-size: 13px; }
.on { background: linear-gradient(#f7d164, #f0be47); border: 1px solid #a98535; border-radius: 3px; }
.serif { font: bold 14px/16px "Liberation Serif", serif; color: #111; }
.italic { font-style: italic; }
.under { text-decoration: underline; }
.split { border-radius: 3px 0 0 3px; }
.splitarrow { width: 12px; border-left: 0; border-radius: 0 3px 3px 0; }
.vsep { width: 1px; height: 20px; background: #c6c4c5; margin: 0 3px 0 4px; }
.tall { width: 1px; height: 50px; background: #c6c4c5; margin: 7px 6px 0 4px; }
.text { height: 22px; gap: 3px; }
.text :deep(.caret) { margin-left: 3px; }
.bigs { display: flex; }
.cells .bigs { padding-left: 3px; }
.big { height: 64px; flex-direction: column; justify-content: flex-start; text-align: center; line-height: 13px; }
.big > :deep(svg) { height: 34px; margin: 1px 0 3px; }
.big span { display: block; white-space: nowrap; }
.big :deep(.caret) { display: inline-block; vertical-align: middle; }
.b76 { width: 75px; } .b56 { width: 56px; } .b44 { width: 43px; } .b48 { width: 50px; } .b60 { width: 61px; }
.style .bigs { padding-left: 4px; }
.list { width: 86px; padding: 0 0 0 2px; }
.list button { gap: 3px; }
.list button :deep(svg:first-child) { width: 16px; }
.list button :deep(.caret) { margin-left: 2px; }

.formulabar { height: 22px; flex: none; display: flex; border-top: 1px solid #89868a; border-bottom: 1px solid #9b989b; background: #f0efed; color: #111; margin-top: 2px; font-size: 12px; }
.namebox { width: 160px; display: flex; align-items: center; padding-right: 6px; }
.namebox input { flex: 1; min-width: 0; text-align: center; padding-right: 6px; }
input { font: inherit; color: inherit; border: 0; background: none; outline: 0; padding: 0; }
.fx { width: 85px; display: flex; justify-content: space-between; align-items: center; background: #c6c3c6; border: 1px solid #8d8a8e; border-width: 0 1px 0 1px; border-radius: 10px 0 0 10px; padding: 0 6px; }
.fx i { width: 8px; height: 8px; border-radius: 4px; background: linear-gradient(#99969a, #ddd); }
.fx button { font: italic bold 15px/18px "Liberation Serif", serif; align-items: baseline; }
.fx sub { font-size: 10px; line-height: 10px; }
.formula { flex: 1; padding-left: 8px; }
.expand { width: 14px; justify-content: center; background: #c6c3c6; border-left: 1px solid #999; }

.work { flex: 1; min-height: 0; display: flex; margin-top: 3px; border-top: 1px solid #89868a; }
.sheet { flex: 1; min-width: 0; overflow: hidden; background: #efeeec; }
table { width: 100%; table-layout: fixed; border-collapse: separate; border-spacing: 0; }
.c0 { width: 26px; } .ca { width: 130px; } .cb { width: 133px; } .cc { width: 64px; }
th { font: 14px/16px "Liberation Sans", sans-serif; color: #333; background: #c9c6c9; padding: 0; border-right: 1px solid #929092; border-bottom: 1px solid #929092; text-align: center; }
thead th { height: 17px; overflow: hidden; }
thead .sel { background: linear-gradient(#f6d155, #eab938); }
.corner svg { margin: 3px 3px 0 auto; }
th.last { border-right: 0; text-align: right; }
tbody tr { height: 20px; }
tbody th { font-size: 13px; line-height: 19px; }
tbody th.sel { background: #f0c040; }
td { padding: 0; height: 20px; line-height: 20px; font-size: 13px; color: #000; }
.head { background: #4a6a9c; color: #eef2f8; font: bold 13px/20px Lato, sans-serif; text-align: center; position: relative; overflow: hidden; white-space: nowrap; }
.second { border-right: 2px solid #111; text-align: left; padding-left: 7px; }
.filter { position: absolute; right: 1px; top: 2px; width: 16px; height: 16px; background: linear-gradient(#f7f6f6, #d6d4d6); border: 1px solid #999; justify-content: center; }
.second .filter { right: 0; }
.note { font: 13px/20px "Liberation Sans", sans-serif; padding-left: 2px; color: #111; }
.name { background: linear-gradient(90deg, #b8c1d0, #c5cad4); padding-left: 2px; font: bold 13px/20px Lato, sans-serif; white-space: nowrap; position: relative; }
.name a { color: #000; text-decoration: underline; }
.current::before { content: ""; position: absolute; inset: -2px -2px -1px 0; border: 3px solid #111; border-left-width: 1px; pointer-events: none; }
.current::after { content: ""; position: absolute; right: -4px; bottom: -3px; width: 6px; height: 6px; background: #111; border: solid #efeeec; border-width: 1px 0 0 1px; }
.qty { text-align: center; font: bold 13px/20px Lato, sans-serif; }

.vscroll { width: 18px; display: flex; flex-direction: column; align-items: center; background: #cbc9cc; border-right: 2px solid #8d8a8e; padding-right: 1px; }
.vscroll button { height: 18px; justify-content: center; }
.vscroll .splitter { width: 14px; height: 7px; background: #f5f5f5; border: 1px solid #666; }
.vscroll .thumb { flex: 1; width: 15px; margin-bottom: 19px; border: 1px solid #77757a; border-radius: 2px; background: linear-gradient(90deg, #f0eff0, #b9b7bc); display: flex; align-items: center; justify-content: center; }
.vscroll .thumb i { width: 8px; height: 7px; background: repeating-linear-gradient(#777 0 1px, transparent 1px 2px); }
.bottom { height: 18px; flex: none; display: flex; background: #c3c0c4; border-top: 1px solid #8d8a8e; border-bottom: 2px solid #8d8a8e; }
.navs { width: 63px; display: flex; align-items: center; justify-content: space-between; padding: 0 6px 0 5px; border-right: 1px solid #999; }
.sheets { flex: 1; min-width: 0; display: flex; overflow: hidden; color: #444; font: 12px/15px "DejaVu Sans Condensed", "DejaVu Sans", sans-serif; }
.sheets button { padding: 0 1px 0 4px; }
.sheets .long { padding-left: 9px; }
.sheets .active { background: #f1f0ef; font-weight: bold; padding: 0 0 0 8px; margin-right: -4px; position: relative; z-index: 1; }
.hscroll { width: 274px; display: flex; align-items: center; padding-right: 18px; }
.hscroll button { width: 17px; justify-content: center; }
.grip { width: 8px; height: 14px; border: 1px solid #666; background: linear-gradient(90deg, #fff 0 2px, #777 2px 3px, #fff 3px); }
.hscroll .thumb { flex: 1; height: 15px; margin-right: 12px; border: 1px solid #8a888c; border-radius: 2px; background: linear-gradient(#eceaee, #bbb9bd); display: flex; align-items: center; justify-content: center; }
.hscroll .thumb i { width: 7px; height: 7px; background: repeating-linear-gradient(90deg, #777 0 1px, transparent 1px 2px); }
</style>
